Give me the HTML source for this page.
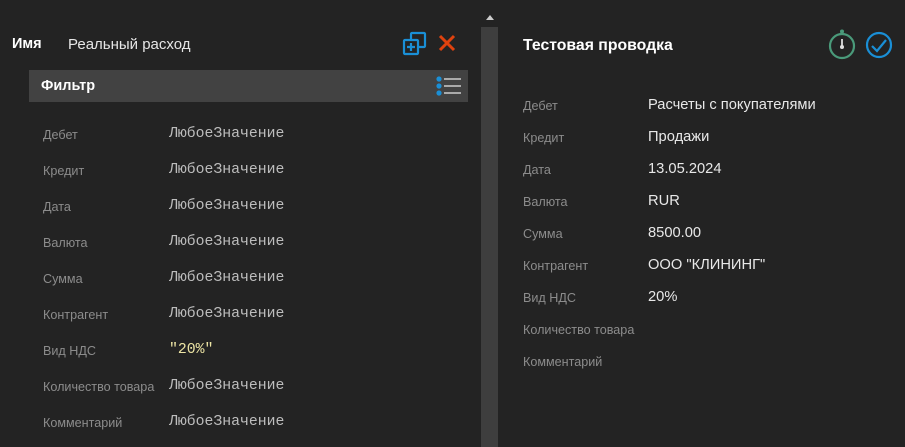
<!DOCTYPE html>
<html><head><meta charset="utf-8"><style>
html,body{margin:0;width:905px;height:447px;overflow:hidden;}
body{background:#232323;position:relative;font-family:"Liberation Sans",sans-serif;}
.a{position:absolute;white-space:nowrap;}
.t{position:absolute;left:0;top:2px;width:905px;height:445px;overflow:hidden;}
.lb{color:#8c8c8c;font-size:12.6px;}
.mv{color:#bdbdbd;font-family:"Liberation Mono",monospace;font-size:14.8px;}
.rv{color:#e8e8e8;font-size:14.7px;}
</style></head><body>
<svg class="a" style="left:402px;top:31px" width="26" height="26" viewBox="0 0 26 26" fill="none" stroke="#1a8fd6" stroke-width="2.2"><rect x="9" y="2" width="14" height="14" rx="1"/><rect x="2" y="9" width="14" height="14" rx="1" fill="#232323"/><path d="M9 12v8M5 16h8"/></svg>
<svg class="a" style="left:437px;top:33px" width="20" height="20" viewBox="0 0 20 20" stroke="#e0420e" stroke-width="3"><path d="M3 3L17 17M17 3L3 17"/></svg>
<div class="a" style="left:29px;top:70px;width:439px;height:32px;background:#424242"></div>
<svg class="a" style="left:434px;top:75px" width="28" height="22" viewBox="0 0 28 22"><g fill="#1a8fd6"><circle cx="5" cy="4" r="2.6"/><circle cx="5" cy="11" r="2.6"/><circle cx="5" cy="18" r="2.6"/></g><g stroke="#ccc" stroke-width="1.6"><path d="M10 4h17M10 11h17M10 18h17"/></g></svg>
<div class="a" style="left:481px;top:27px;width:17px;height:420px;background:#3e3e3e"></div>
<div class="a" style="left:486px;top:15px;width:0;height:0;border-left:4px solid transparent;border-right:4px solid transparent;border-bottom:5px solid #ccc"></div>
<svg class="a" style="left:827px;top:28px" width="30" height="32" viewBox="0 0 30 32" fill="none"><circle cx="15" cy="3.5" r="2" fill="#4a9a7a"/><circle cx="15" cy="18" r="12" stroke="#4a9a7a" stroke-width="2.2"/><path d="M15 11v8" stroke="#ddd" stroke-width="1.8"/><circle cx="15" cy="19" r="2" fill="#ddd"/></svg>
<svg class="a" style="left:865px;top:31px" width="28" height="28" viewBox="0 0 28 28" fill="none" stroke="#1a8fd6" stroke-width="2.2"><circle cx="14" cy="14" r="12"/><path d="M7 15l5 5 9-11"/></svg>
<div class="t">
<div class="a" style="left:12px;top:34px;color:#fff;font-weight:bold;font-size:14.5px">Имя</div>
<div class="a" style="left:68px;top:34px;color:#e6e6e6;font-size:15px">Реальный расход</div>
<div class="a" style="left:41px;top:76px;color:#fff;font-weight:bold;font-size:14.5px">Фильтр</div>
<div class="a lb" style="left:43px;top:126px">Дебет</div><div class="a mv" style="left:169px;top:124px">ЛюбоеЗначение</div>
<div class="a lb" style="left:43px;top:162px">Кредит</div><div class="a mv" style="left:169px;top:160px">ЛюбоеЗначение</div>
<div class="a lb" style="left:43px;top:198px">Дата</div><div class="a mv" style="left:169px;top:196px">ЛюбоеЗначение</div>
<div class="a lb" style="left:43px;top:234px">Валюта</div><div class="a mv" style="left:169px;top:232px">ЛюбоеЗначение</div>
<div class="a lb" style="left:43px;top:270px">Сумма</div><div class="a mv" style="left:169px;top:268px">ЛюбоеЗначение</div>
<div class="a lb" style="left:43px;top:306px">Контрагент</div><div class="a mv" style="left:169px;top:304px">ЛюбоеЗначение</div>
<div class="a lb" style="left:43px;top:342px">Вид НДС</div><div class="a mv" style="left:169px;top:340px;color:#ece4a4">"20%"</div>
<div class="a lb" style="left:43px;top:378px">Количество товара</div><div class="a mv" style="left:169px;top:376px">ЛюбоеЗначение</div>
<div class="a lb" style="left:43px;top:414px">Комментарий</div><div class="a mv" style="left:169px;top:412px">ЛюбоеЗначение</div>
<div class="a" style="left:523px;top:35px;color:#fff;font-weight:bold;font-size:15.8px">Тестовая проводка</div>
<div class="a lb" style="left:523px;top:97px">Дебет</div><div class="a rv" style="left:648px;top:95px">Расчеты с покупателями</div>
<div class="a lb" style="left:523px;top:129px">Кредит</div><div class="a rv" style="left:648px;top:127px">Продажи</div>
<div class="a lb" style="left:523px;top:161px">Дата</div><div class="a rv" style="left:648px;top:159px">13.05.2024</div>
<div class="a lb" style="left:523px;top:193px">Валюта</div><div class="a rv" style="left:648px;top:191px">RUR</div>
<div class="a lb" style="left:523px;top:225px">Сумма</div><div class="a rv" style="left:648px;top:223px">8500.00</div>
<div class="a lb" style="left:523px;top:257px">Контрагент</div><div class="a rv" style="left:648px;top:255px">ООО "КЛИНИНГ"</div>
<div class="a lb" style="left:523px;top:289px">Вид НДС</div><div class="a rv" style="left:648px;top:287px">20%</div>
<div class="a lb" style="left:523px;top:321px">Количество товара</div>
<div class="a lb" style="left:523px;top:353px">Комментарий</div>
</div>
</body></html>
